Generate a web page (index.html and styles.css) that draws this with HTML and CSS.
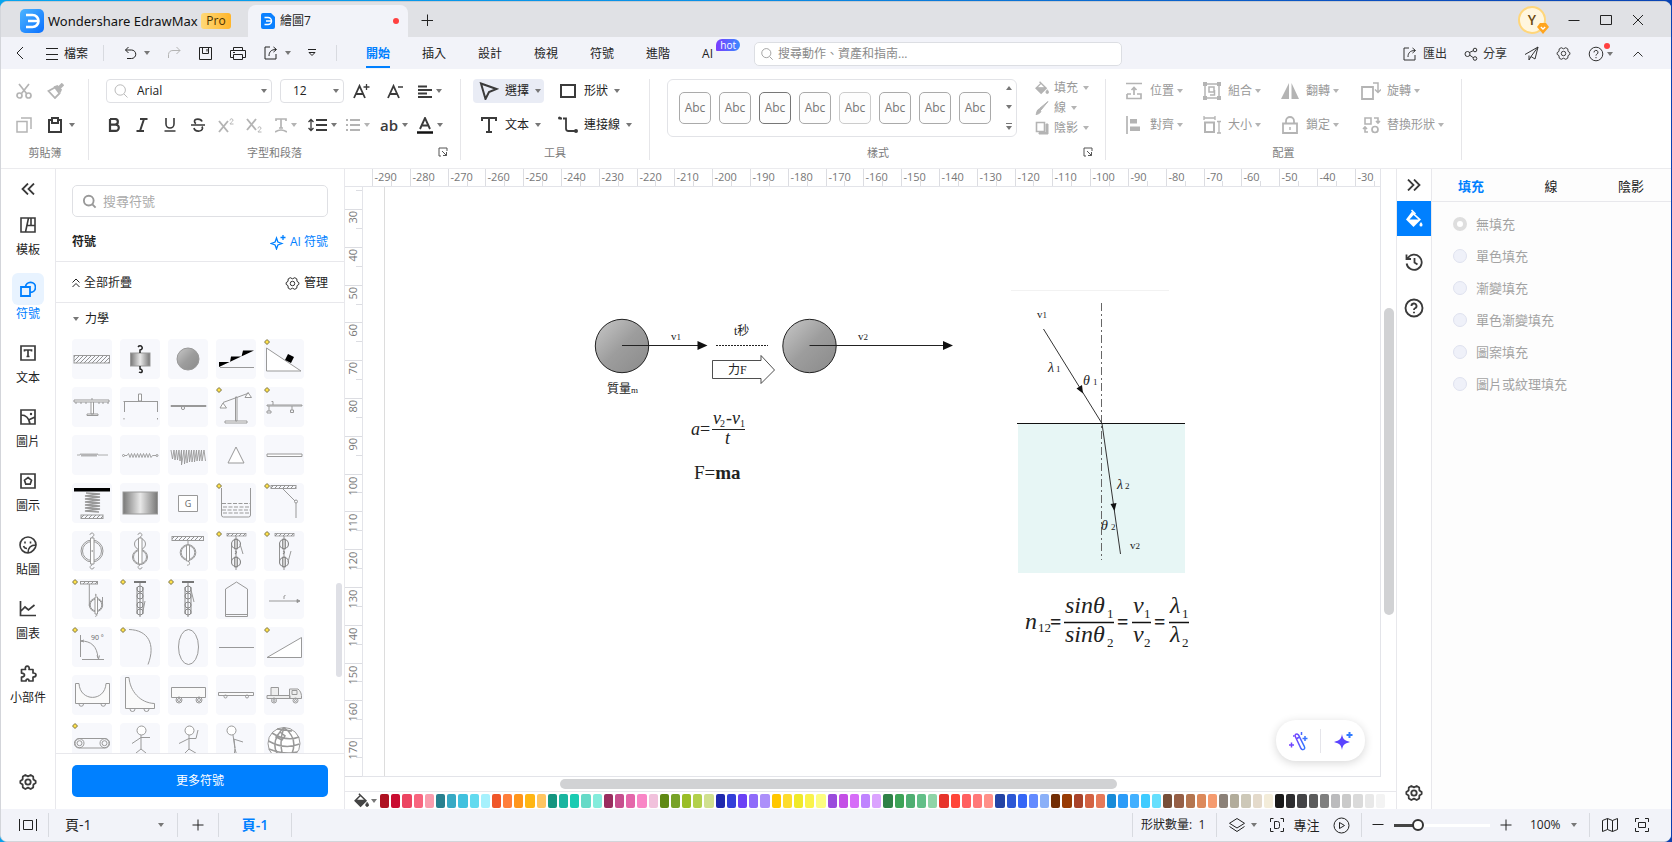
FILE: index.html
```html
<!DOCTYPE html>
<html lang="zh-Hant">
<head>
<meta charset="utf-8">
<title>Wondershare EdrawMax</title>
<meta name="viewport" content="width=device-width, initial-scale=1">
<link rel="stylesheet" href="styles.css">
</head>
<body>
<svg class="defs" width="0" height="0" aria-hidden="true">
  <defs>
    <linearGradient id="g-logo" x1="0" y1="0" x2="1" y2="1"><stop offset="0" stop-color="#4db5ff"/><stop offset="1" stop-color="#0a70ff"/></linearGradient>
    <linearGradient id="g-ball" x1="0" y1="0" x2="1" y2="1"><stop offset="0" stop-color="#c9c9c9"/><stop offset=".5" stop-color="#9d9d9d"/><stop offset="1" stop-color="#8a8a8a"/></linearGradient>
    <linearGradient id="g-metal"><stop offset="0" stop-color="#777"/><stop offset=".5" stop-color="#e8e8e8"/><stop offset="1" stop-color="#777"/></linearGradient>
    <linearGradient id="g-ai" x1="0" y1="0" x2="1" y2="0"><stop offset="0" stop-color="#7a3cff"/><stop offset="1" stop-color="#2f7bff"/></linearGradient>
    <pattern id="hatch" width="4" height="4" patternUnits="userSpaceOnUse"><path d="M-1 5 5-1M-1 1 1-1M3 5 5 3" stroke="#777" stroke-width=".8"/></pattern>
    <symbol id="mark" viewBox="0 0 6 6"><path d="M3 .5 5.500 3 3 5.500.5 3z" fill="#ffe14a" stroke="#6b6436" stroke-width=".9"/></symbol>
    <symbol id="gear" viewBox="0 0 16 16"><path d="M5.600 1.800 8 3l2.400-1.200 2.200 1.300.2 2.600 2 1.400v1.800l-2 1.400-.2 2.600-2.200 1.300L8 13l-2.400 1.200-2.200-1.300-.2-2.600-2-1.400V7.100l2-1.400.2-2.600z" fill="none" stroke="currentColor" stroke-linejoin="round"/><circle cx="8" cy="8" r="2.400" fill="none" stroke="currentColor"/></symbol>
    <symbol id="lens" viewBox="0 0 16 16"><circle cx="7.200" cy="7" r="5.200" fill="none" stroke="currentColor"/><path d="m11 11 3.500 3.500" fill="none" stroke="currentColor"/></symbol>
    <symbol id="help" viewBox="0 0 16 16"><circle cx="8" cy="8" r="6.800" fill="none" stroke="currentColor"/><path d="M6 6.400a2 2 0 1 1 2.800 1.800c-.6.3-.8.6-.8 1.400M8 11v1.200" fill="none" stroke="currentColor"/></symbol>
    <symbol id="export" viewBox="0 0 16 16"><path d="M7 2H2v12h11v-5M6 11c0-4 2-6.500 7-6.500M10.500 2l3 2.500-3 2.500" fill="none" stroke="currentColor"/></symbol>
    <symbol id="bucket" viewBox="0 0 16 16"><path d="M5.200.8 12.800 8.200 7 14 1.200 8.200 6.500 3M2.500 8h9L7 13.500z" fill="none" stroke="currentColor" stroke-width="1.600"/><path d="M2 8.200h10L7 13.400z" fill="currentColor"/><path d="M14 10c1.300 1.700 1.500 2.200 1.500 2.800a1.500 1.500 0 0 1-3 0c0-.6.300-1.200 1.500-2.800" fill="currentColor"/></symbol>
    <symbol id="launch" viewBox="0 0 10 10"><path d="M3 9H1V1h8v3M4 4l4.500 4.500M8.500 5v3.500H5" fill="none" stroke="currentColor"/></symbol>
    <symbol id="hooks" viewBox="0 0 40 40"><path d="M20 7V6c3-1 2-4 0-4s-2 2-2 2M20 33v1c-3 1-2 4 0 4s2-2 2-2" fill="none" stroke="#999"/></symbol>
    <symbol id="pulleys" viewBox="0 0 40 40"><rect x="11" y="2.500" width="19" height="2.500" fill="url(#hatch)" stroke="#888" stroke-width=".7"/><path d="M20 5v34M15.500 13v18M18.500 8v10h3V8zM18.500 26v10h3V26z" fill="#fff" stroke="#888" stroke-width=".9"/><g fill="none" stroke="#888" stroke-width="1.200"><circle cx="20" cy="13" r="4.500"/><circle cx="20" cy="31" r="4.500"/><path d="M19 20q3 1 0 3"/></g></symbol>
    <symbol id="chain" viewBox="0 0 40 40"><rect x="14" y="2" width="12" height="2" fill="#777" stroke="none"/><path d="M20 4v34M17 8v27M23 8v27" stroke="#888" fill="none"/><g fill="none" stroke="#888"><circle cx="20" cy="10" r="3"/><circle cx="20" cy="17" r="3"/><circle cx="20" cy="26" r="3"/><circle cx="20" cy="33" r="3"/></g></symbol>
  </defs>
</svg>

<div class="window">
  <header class="titlebar">
    <div class="brand">
      <svg width="24" height="24" viewBox="0 0 24 24"><rect width="24" height="24" rx="5" fill="url(#g-logo)"/><path d="M6 6h6.500a6 6 0 0 1 0 12H6M8 12h10" fill="none" stroke="#fff" stroke-width="2.600"/></svg>
      <span class="brand-name">Wondershare EdrawMax</span>
      <span class="pro">Pro</span>
    </div>
    <div class="doc-tab">
      <svg width="14" height="16" viewBox="0 0 14 16"><path d="M2 0h8l4 4v10a2 2 0 0 1-2 2H2a2 2 0 0 1-2-2V2a2 2 0 0 1 2-2" fill="#0a80ff"/><path d="M3.500 4.500h3.500a3.500 3.500 0 0 1 0 7H3.500M5 8h5" fill="none" stroke="#fff" stroke-width="1.500"/></svg>
      <span>繪圖7</span><i class="dot"></i>
    </div>
    <button class="add-doc" aria-label="新增文件"><svg width="12" height="12" viewBox="0 0 12 12"><path d="M6.500 .5v12M.5 6.500h12"/></svg></button>
    <div class="win-tools">
      <button class="avatar" aria-label="帳戶">Y<svg class="gem" width="12" height="11" viewBox="0 0 12 11"><path d="M3 0h6l3 4-6 7-6-7z" fill="#ffa51f"/><path d="m3.800 4 2.200 2 2.200-2" fill="none" stroke="#fff" stroke-width="1.300"/></svg></button>
      <button aria-label="最小化"><svg width="12" height="12" viewBox="0 0 12 12"><path d="M.5 6.500h11"/></svg></button>
      <button aria-label="最大化"><svg width="12" height="12" viewBox="0 0 12 12"><path d="M.5 1.500h11v9H.5z"/></svg></button>
      <button aria-label="關閉"><svg width="12" height="12" viewBox="0 0 12 12"><path d="m1 1 10 10M11 1 1 11"/></svg></button>
    </div>
  </header>

  <nav class="menubar">
    <button class="back" aria-label="返回"><svg width="8" height="14" viewBox="0 0 8 14"><path d="M7 1 1 7l6 6"/></svg></button>
    <button class="file"><svg width="12" height="12" viewBox="0 0 12 12"><path d="M0 .5h12M0 6.500h12M0 11.500h12"/></svg>檔案</button>
    <i class="vbar"></i>
    <div class="quick">
      <button aria-label="復原"><svg width="14" height="14" viewBox="0 0 14 14"><path d="M4.500 1 1.500 4l3 3M1.500 4h6a4 4 0 0 1 0 8.500H3"/></svg><i class="caret"></i></button>
      <button class="off" aria-label="重做"><svg width="14" height="14" viewBox="0 0 14 14"><path d="m9.500 1 3.500 3.500L9.500 8M13 4.500H6a4.500 4.500 0 0 0-4.500 4V12"/></svg></button>
      <button aria-label="儲存"><svg width="15" height="15" viewBox="0 0 15 15"><path d="M1.500 1.500h12v12h-12zM4.500 1.500v6h6v-6M9 3v2.500"/></svg></button>
      <button aria-label="列印"><svg width="16" height="15" viewBox="0 0 16 15"><path d="M3.500 4.500v-3h9v3M3.500 11.500h-3v-7h15v7h-3M3.500 8.500h9v5h-9zM3 6.500h2"/></svg></button>
      <button aria-label="匯出"><svg width="16" height="16"><use href="#export"/></svg><i class="caret"></i></button>
      <button aria-label="自訂工具列"><svg width="8" height="8" viewBox="0 0 8 8"><path d="M0 .5h8M1 3.500l3 3 3-3z"/></svg></button>
    </div>
    <i class="vbar"></i>
    <div class="tabs">
      <a class="on" href="#home">開始</a><a href="#insert">插入</a><a href="#design">設計</a><a href="#view">檢視</a><a href="#symbols">符號</a><a href="#advanced">進階</a><a class="ai" href="#ai">AI<b class="hot">hot</b></a>
    </div>
    <label class="find"><svg width="14" height="14"><use href="#lens" width="14" height="14"/></svg><input type="text" aria-label="搜尋" placeholder="搜尋動作、資產和指南..."></label>
    <div class="menu-right">
      <button><svg width="16" height="16"><use href="#export"/></svg>匯出</button>
      <button><svg width="14" height="14" viewBox="0 0 14 14"><circle cx="3.500" cy="7" r="2.500"/><circle cx="11" cy="3" r="1.800"/><circle cx="11" cy="11.500" r="1.800"/><path d="M5.500 5.500 9.300 3.700M5.800 8.200l3.500 2.500"/></svg>分享</button>
      <button aria-label="傳送"><svg width="15" height="15" viewBox="0 0 15 15"><path d="M1 8.500 14 1l-3 12-4-2.500L14 1M5 9.500V14l2-3.500"/></svg></button>
      <button aria-label="設定"><svg width="15" height="15"><use href="#gear" width="15" height="15"/></svg></button>
      <button class="help" aria-label="說明"><svg width="16" height="16"><use href="#help" width="16" height="16"/></svg><i class="dot"></i><i class="caret"></i></button>
      <button aria-label="收合功能區"><svg width="10" height="6" viewBox="0 0 10 6"><path d="m.5 5.500 4.500-4.500 4.500 4.500"/></svg></button>
    </div>
  </nav>

  <section class="ribbon">
    <div class="group clip">
      <div class="row"><button class="off" aria-label="剪下"><svg width="16" height="16" viewBox="0 0 16 16"><g stroke-width="1.700"><path d="M3 1l7.500 9.500M13 1 5.500 10.500"/><circle cx="3.500" cy="12.500" r="2.500"/><circle cx="12.500" cy="12.500" r="2.500"/></g></svg></button><button class="off" aria-label="複製格式"><svg width="17" height="16" viewBox="0 0 17 16"><path d="M1.500 8 8 4.500l4.500 6L8 15z" stroke-width="1.800"/><path d="M6.500 3.500 13.500 10 15 6.500 10.500 2z" fill="currentColor" stroke="none"/><path d="m12 5 4-4" stroke-width="3.500"/></svg></button></div>
      <div class="row"><button class="off" aria-label="複製"><svg width="16" height="16" viewBox="0 0 16 16"><path d="M1 4.500h10V15H1zM5 1h10v11" stroke-width="1.500"/></svg></button><button aria-label="貼上"><svg width="16" height="16" viewBox="0 0 16 16"><path d="M5 3H2v12h12V3h-3M5 1h6v5H5z" stroke-width="2"/></svg><i class="caret"></i></button></div>
      <h2>剪貼簿</h2>
    </div>
    <div class="group font">
      <div class="row first">
        <label class="combo family"><svg width="16" height="16"><use href="#lens"/></svg><select aria-label="字型"><option>Arial</option></select><i class="caret"></i></label>
        <label class="combo size"><select aria-label="字型大小"><option>12</option></select><i class="caret"></i></label>
        <button class="w34" aria-label="放大字型"><svg width="17" height="16" viewBox="0 0 17 16"><path d="m1 15 5.500-12L12 15M3 11h7" stroke-width="1.800"/><path d="M10.500 4h6M13.500 1v6" stroke-width="1.300"/></svg></button>
        <button class="w34" aria-label="縮小字型"><svg width="17" height="16" viewBox="0 0 17 16"><path d="m1 15 5.500-12L12 15M3 11h7" stroke-width="1.800"/><path d="M11 4h5" stroke-width="1.300"/></svg></button>
        <button class="w36" aria-label="對齊"><svg width="14" height="13" viewBox="0 0 14 13"><path d="M0 1.500h9M0 5h14M0 8.500h9M0 12h14" stroke-width="1.800"/></svg><i class="caret"></i></button>
      </div>
      <div class="row">
        <button class="w28" aria-label="粗體"><svg width="12" height="14" viewBox="0 0 12 14"><path d="M2 1h5a2.800 2.800 0 0 1 0 5.700H2V1M2 6.700h5.700a3 3 0 0 1 0 6.200H2V6" stroke-width="2.200"/></svg></button>
        <button class="w28" aria-label="斜體"><svg width="12" height="14" viewBox="0 0 12 14"><path d="M4 1h7.500M.5 13H8M8 1 4 13" stroke-width="2"/></svg></button>
        <button class="w28" aria-label="底線"><svg width="12" height="14" viewBox="0 0 12 14"><path d="M2 0v6a4 4 0 0 0 8 0V0M.5 13h11" stroke-width="1.600"/></svg></button>
        <button class="w28" aria-label="刪除線"><svg width="14" height="14" viewBox="0 0 14 14"><path d="M11 3.500C10 .2 3.500.2 3.500 3.500c0 1 .6 1.600 1.500 2M0 7h14M3 10c.6 4 8.500 4 8.500.3 0-.7-.3-1.200-.7-1.600" stroke-width="1.700"/></svg></button>
        <button class="w28 off" aria-label="上標"><svg width="16" height="15" viewBox="0 0 16 15"><path d="m1 3 9 11M10 3 1 14" stroke-width="1.900"/><path d="M12 2.500c0-2.500 3-2 3-.3C15 3.500 12 5 12 6h3.500"/></svg></button>
        <button class="w28 off" aria-label="下標"><svg width="16" height="15" viewBox="0 0 16 15"><path d="m1 1 9 11M10 1 1 12" stroke-width="1.900"/><path d="M12 10.500c0-2.500 3-2 3-.3 0 1.300-3 2.800-3 3.800h3.500"/></svg></button>
        <button class="w36 off" aria-label="文字效果"><svg width="12" height="15" viewBox="0 0 12 15"><path d="M1 3V1h10v2M6 1v9M4 10h4M0 14q6-4 12 0" stroke-width="1.700"/></svg><i class="caret"></i></button>
        <button class="w36" aria-label="行距"><svg width="19" height="14" viewBox="0 0 19 14"><path d="M8 2h11M8 7h11M8 12h11" stroke-width="2"/><path d="M3 1v12M.5 4 3 1.500 5.500 4M.5 10 3 12.500 5.500 10" stroke-width="1.300"/></svg><i class="caret"></i></button>
        <button class="w36 off" aria-label="項目符號"><svg width="14" height="12" viewBox="0 0 14 12"><path d="M4 1h10M4 6h10M4 11h10M0 1h2M0 6h2M0 11h2" stroke-width="2"/></svg><i class="caret"></i></button>
        <button class="w36 ab" aria-label="大小寫">ab<i class="caret"></i></button>
        <button class="w36" aria-label="字型色彩"><svg width="16" height="17" viewBox="0 0 16 17"><path d="m3 12 5-11 5 11M5 8.500h6" stroke-width="1.900"/><path d="M0 15.500h16" stroke="#111" stroke-width="2.500"/></svg><i class="caret"></i></button>
      </div>
      <h2>字型和段落</h2><button class="launch" aria-label="字型設定"><svg width="10" height="10"><use href="#launch"/></svg></button>
    </div>
    <div class="group tools">
      <div class="row"><button class="tool sel"><svg width="20" height="18" viewBox="0 0 20 18"><path d="M2 1.500 17.500 7 10 10l-3.500 7z" stroke-width="2"/></svg>選擇<i class="caret"></i></button><button class="tool"><svg width="20" height="18" viewBox="0 0 20 18"><path d="M3 3h14v12H3z" stroke-width="2"/></svg>形狀<i class="caret"></i></button></div>
      <div class="row"><button class="tool"><svg width="20" height="18" viewBox="0 0 20 18"><path d="M3 5V2h14v3M10 2v14M7 16h6" stroke-width="2"/></svg>文本<i class="caret"></i></button><button class="tool"><svg width="20" height="18" viewBox="0 0 20 18"><path d="M2 2.500h6v10q0 2.500 2.500 2.500H18" stroke-width="1.800" stroke-dasharray="2 1 30"/><circle cx="1.500" cy="2" r="1.500" fill="currentColor" stroke="none"/><circle cx="18" cy="15" r="2" fill="currentColor" stroke="none"/></svg>連接線<i class="caret"></i></button></div>
      <h2>工具</h2>
    </div>
    <div class="group styles">
      <div class="style-row">
        <div class="gallery">
          <button>Abc</button><button>Abc</button><button class="dk">Abc</button><button>Abc</button><button class="lt">Abc</button><button>Abc</button><button>Abc</button><button>Abc</button>
          <div class="scroller"><i class="caret up"></i><i class="caret"></i><i class="more"><i class="caret"></i></i></div>
        </div>
        <div class="paint off">
          <button><svg width="14" height="14"><use href="#bucket" width="14" height="14"/></svg>填充<i class="caret"></i></button>
          <button><svg width="14" height="14" viewBox="0 0 14 14"><path d="M13 .5 6 9 4.500 7.500zM4 8l2 2c-.5 2-2 3-5 3.500C2 12 1.500 9 4 8" fill="currentColor"/></svg>線<i class="caret"></i></button>
          <button><svg width="14" height="14" viewBox="0 0 14 14"><path d="M1.500 1.500h8v9h-8z" stroke-width="1.600"/><path d="M11 3h2v10H4v-1.500h7z" fill="currentColor"/></svg>陰影<i class="caret"></i></button>
        </div>
      </div>
      <h2>樣式</h2><button class="launch" aria-label="樣式設定"><svg width="10" height="10"><use href="#launch"/></svg></button>
    </div>
    <div class="group arrange">
      <div class="matrix off">
        <button><svg width="20" height="18" viewBox="0 0 20 18"><path d="M2 1.500h16M3 12v4.500h14V12h-4M3 12h4M10 13V6M7.500 8 10 5.500 12.500 8" stroke-width="1.700"/></svg>位置<i class="caret"></i></button>
        <button><svg width="20" height="18" viewBox="0 0 20 18"><path d="M3 2h14v14H3z" stroke-width="1.500"/><path d="M1 0h4v4H1zM15 0h4v4h-4zM1 14h4v4H1zM15 14h4v4h-4z" fill="currentColor" stroke="none"/><path d="M7 5h5v5H7zM12.500 8v5H8" stroke-width="1.500"/></svg>組合<i class="caret"></i></button>
        <button><svg width="20" height="18" viewBox="0 0 20 18"><path d="M9 1v16H1zM11.500 1v16H19z" fill="currentColor" stroke="none"/></svg>翻轉<i class="caret"></i></button>
        <button><svg width="20" height="18" viewBox="0 0 20 18"><path d="M1 5h11v12H1z" stroke-width="1.800"/><path d="M12 1h5v9M14 7.500l3 3 3-3" stroke-width="1.500"/></svg>旋轉<i class="caret"></i></button>
        <button><svg width="20" height="18" viewBox="0 0 20 18"><path d="M3 0v18" stroke-width="1.700"/><path d="M6 3h7v4.500H6zM6 10.500h10V15H6z" fill="currentColor" stroke="none"/></svg>對齊<i class="caret"></i></button>
        <button><svg width="20" height="18" viewBox="0 0 20 18"><path d="M3 6.500h9V16H3z" stroke-width="2"/><path d="M2 2h11M2 0v4M13 0v4M17 5.500V17M15 5.500h4M15 17h4" stroke-width="1.300"/></svg>大小<i class="caret"></i></button>
        <button><svg width="20" height="18" viewBox="0 0 20 18"><path d="M3 7.500h14V17H3zM6 7V5a4 4 0 0 1 8 0v2" stroke-width="1.800"/><path d="M10 11v3" stroke-width="1.500"/></svg>鎖定<i class="caret"></i></button>
        <button><svg width="20" height="18" viewBox="0 0 20 18"><path d="M4 2h6v6H4zM13 2h4v4M15 5l2 2 2-2M7 16H4v-4M2 13l2-2 2 2" stroke-width="1.600"/><circle cx="14" cy="13.500" r="3" stroke-width="1.700"/></svg>替換形狀<i class="caret"></i></button>
      </div>
      <h2>配置</h2>
    </div>
  </section>

  <main class="work">
    <aside class="rail">
      <button class="fold" aria-label="收合"><svg width="14" height="12" viewBox="0 0 14 12"><path d="M7 .5 1.500 6 7 11.500M13 .5 7.500 6l5.500 5.500" stroke-width="1.800"/></svg></button>
      <a href="#tpl"><span><svg width="16" height="16" viewBox="0 0 16 16"><path d="M1 1h14v14H1zM5.500 15 8.500 1M7.500 8.500H15M11 1v7" stroke-width="1.600"/></svg></span>模板</a>
      <a class="on" href="#sym"><span><svg width="16" height="16" viewBox="0 0 16 16"><path d="M1 6h9v9H1zM5.500 6a5 5 0 1 1 5 5.300" stroke-width="1.800"/></svg></span>符號</a>
      <a href="#text"><span><svg width="16" height="16" viewBox="0 0 16 16"><path d="M1 1h14v14H1z" stroke-width="1.700"/><path d="M4.500 6.500V5h7v1.500M8 5v6.500M6.500 11.500h3" stroke-width="1.700"/></svg></span>文本</a>
      <a href="#pic"><span><svg width="16" height="16" viewBox="0 0 16 16"><path d="M1 1h14v14H1zM1 6c5 0 8 3 9 9M8.500 11 15 8" stroke-width="1.700"/><circle cx="11" cy="5" r="1.200" fill="currentColor" stroke="none"/></svg></span>圖片</a>
      <a href="#icon"><span><svg width="16" height="16" viewBox="0 0 16 16"><path d="M1 1h14v14H1zM8 4.500l3.500 2.700-1.300 4H5.800l-1.300-4z" stroke-width="1.700"/></svg></span>圖示</a>
      <a href="#sticker"><span><svg width="18" height="18" viewBox="0 0 18 18"><path d="M17 9a8 8 0 1 0-8 8c0-5 3-8 8-8 0 3-4 8-8 8M4.500 10c.6 1.700 2 2.500 3.500 2.500" stroke-width="1.600"/><path d="M6 5.500v2M11.500 5.500v2" stroke-width="1.600"/></svg></span>貼圖</a>
      <a href="#chart"><span><svg width="18" height="16" viewBox="0 0 18 16"><path d="M1.500 0v14.500H17M2 10l4-4 3.500 3L15.500 4" stroke-width="1.700"/></svg></span>圖表</a>
      <a href="#widget"><span><svg width="18" height="17" viewBox="0 0 18 17"><path d="M2.500 4.500h4c-1.500-4.500 5-4.500 3.500 0h4V8c4 0 4 4 0 4v4h-4c0-2.500-3-2.500-3 0h-4.500v-4c4-.3 4-4 0-3.800z" stroke-width="1.700" stroke-linejoin="round"/></svg></span>小部件</a>
      <button class="pref" aria-label="設定"><svg width="18" height="18"><use href="#gear" width="18" height="18" stroke-width="1.600"/></svg></button>
    </aside>

    <section class="panel">
      <label class="sym-find"><svg width="15" height="15"><use href="#lens" width="15" height="15" stroke-width="2"/></svg><input type="text" aria-label="搜尋符號" placeholder="搜尋符號"></label>
      <div class="panel-head"><h1>符號</h1><a href="#ai-symbol"><svg width="16" height="15" viewBox="0 0 16 15"><path d="m6.500 3 1.400 4 4 1.500-4 1.500-1.400 4-1.400-4-4-1.500 4-1.500zM13 0v5M10.500 2.500h5" stroke-width="1.300"/></svg>AI 符號</a></div>
      <div class="panel-bar"><button><svg width="8" height="10" viewBox="0 0 8 10"><path d="M.5 4.500 4 1l3.500 3.500M.5 9 4 5.500 7.500 9"/></svg>全部折疊</button><button><svg width="15" height="15"><use href="#gear" width="15" height="15"/></svg>管理</button></div>
      <div class="library">
        <button class="cat"><i class="caret"></i>力學</button>
        <div class="symbols">
          <svg viewBox="0 0 40 40"><rect x="2" y="16.500" width="35.500" height="7.500" fill="url(#hatch)"/></svg>
          <svg viewBox="0 0 40 40"><rect x="10.500" y="14" width="19.500" height="13" fill="url(#g-metal)"/><path d="M20 14v-3c4-1 2-5-1-4l-1 1M20 27v3c4 1 2 5-1 3" stroke="#222" stroke-width="1.500"/></svg>
          <svg viewBox="0 0 40 40"><circle cx="20" cy="20" r="11" fill="url(#g-ball)"/></svg>
          <svg viewBox="0 0 40 40"><path d="M3 28V23h11l1-5.500h10.500L27 11.500h11z" fill="#000" stroke="none"/><path d="M4 28.500h34"/></svg>
          <svg viewBox="0 0 40 40"><path d="M2.500 9v23H37z" fill="#fff"/><path d="m24 15 6 3-3 6-6-3z" fill="#000" stroke="none"/><use href="#mark" width="6" height="6"/></svg>
          <svg viewBox="0 0 40 40"><path d="M2 13h35v2H2zM4 15v2M9 15v2M14 15v2M27 15v2M31 15v2M36 15v2M19 15v12h2.500V15M20 11v2M15 27h11v1.500H15z" fill="#fff"/></svg>
          <svg viewBox="0 0 40 40"><path d="M3.500 14.500H38M18.500 7h3v7h-3zM4.500 15v10M37.500 15v10M4 31v1.500M37.500 31v1.500" fill="#fff"/></svg>
          <svg viewBox="0 0 40 40"><path d="M3 18.500h35v1H3z"/><circle cx="15" cy="21" r="1.600"/></svg>
          <svg viewBox="0 0 40 40"><path d="M19.500 10h1.500v24h-1.500zM9 34h22v2H9zM7 15.500 33 6M7 16l-3 5h6.500zM32 5.500l-3 5h6.500z" fill="#fff"/><use href="#mark" width="6" height="6"/></svg>
          <svg viewBox="0 0 40 40"><path d="M3 18h35v1H3zM7.500 14.500h1.500V18M5 19v5H3v2h4v-2H5M28 19v4h-1.500v2.500h3V23H28"/><use href="#mark" width="6" height="6"/></svg>
          <svg viewBox="0 0 40 40"><path d="M5 20h3l1-1.500 1 3 1-3 1 3 1-3 1 3 1-3 1 3 1-3 1 3 1-3 1 3 1-3 1 3 1-3 1 3 1-3 1 1.500H36" stroke-width=".8"/></svg>
          <svg viewBox="0 0 40 40"><circle cx="3.500" cy="20.500" r="1"/><circle cx="37" cy="20.500" r="1"/><path d="M4.500 20.500H7l1.500-2 1.500 4 1.500-4 1.500 4 1.500-4 1.500 4 1.500-4 1.500 4 1.500-4 1.500 4 1.500-4 1.500 4 1.500-4 1.500 4 1.500-4 1.500 4 1.500-2H36" stroke-width=".9"/></svg>
          <svg viewBox="0 0 40 40"><path d="M3 15 4.500 24 6 15 7 25 8.500 15 9.500 25 11 15 12 26 13.500 15V30L16 15 16.500 29 18.500 15 19 28 21 15 21.500 27 23.500 15 24 27 26 15 26.500 27 28.500 15 29 26 31 15 31.500 26 33.500 15 34 26 36 15 37.500 26" stroke-width=".9"/></svg>
          <svg viewBox="0 0 40 40"><path d="M20 12 12 28h16z" fill="#fff"/></svg>
          <svg viewBox="0 0 40 40"><path d="M3 19h35v2.500H3z" fill="#fff"/></svg>
          <svg viewBox="0 0 40 40"><path d="M2 5h36v3.500H2z" fill="#000" stroke="none"/><path d="m14 10 14 1-15 2 15 1-15 2 15 1-15 2 15 1-15 2 15 1-15 2 15 1-15 2 14 1" stroke-width="1.600"/><rect x="9" y="32" width="22" height="3.500" fill="url(#hatch)"/></svg>
          <svg viewBox="0 0 40 40"><rect x="3" y="9" width="34.500" height="22" fill="url(#g-metal)"/></svg>
          <svg viewBox="0 0 40 40"><path d="M10.500 12.500h19v16h-19z" fill="#fff"/><text class="g" x="20" y="24">G</text></svg>
          <svg viewBox="0 0 40 40"><path d="M5.500 5v27q0 2 2 2h25q2 0 2-2V5"/><path d="M6 20.500h28M7 24h26M6 27h28M7 30h26" stroke-dasharray="4 1.500"/><use href="#mark" width="6" height="6"/></svg>
          <svg viewBox="0 0 40 40"><rect x="7" y="2.500" width="25" height="3" fill="url(#hatch)"/><path d="m19 6 12 12M32 20v15"/><circle cx="32" cy="18.500" r="1.500"/><use href="#mark" width="6" height="6"/></svg>
          <svg viewBox="0 0 40 40"><circle cx="20" cy="20" r="11"/><circle cx="20" cy="20" r="9.500"/><path d="M18.500 7h3.500v26h-3.500z" fill="#fff"/><use href="#hooks"/><circle cx="20.200" cy="20" r=".5"/></svg>
          <svg viewBox="0 0 40 40"><circle cx="20" cy="13" r="5.500"/><circle cx="20" cy="26" r="7.500"/><circle cx="20" cy="26" r="6.500"/><path d="M18.500 7h3.500v26h-3.500z" fill="#fff"/><use href="#hooks"/></svg>
          <svg viewBox="0 0 40 40"><rect x="4" y="5.500" width="31.500" height="4" fill="url(#hatch)"/><circle cx="20" cy="21.500" r="7.800"/><circle cx="20" cy="21.500" r="6.800"/><path d="M20 9.500v5M18.500 14h3v16h-3zM20 30c3 2 1 5-1 4" fill="#fff"/></svg>
          <svg viewBox="0 0 40 40"><use href="#pulleys"/><path d="m24 13 3 10"/><use href="#mark" width="6" height="6"/></svg>
          <svg viewBox="0 0 40 40"><use href="#pulleys"/><path d="m24 31 3-11"/><use href="#mark" width="6" height="6"/></svg>
          <svg viewBox="0 0 40 40"><rect x="8.500" y="2.500" width="17" height="2.500" fill="url(#hatch)"/><circle cx="24" cy="26" r="6.700"/><circle cx="24" cy="26" r="5.800"/><path d="M17.300 5v22M30.500 25v-7M23 18h2.500v17H23zM23 17q3-1 0-2M24 35c2 1 0 3-1 2" fill="#fff"/><use href="#mark" width="6" height="6"/></svg>
          <svg viewBox="0 0 40 40"><use href="#chain"/><path d="m23 32 2-10"/><use href="#mark" width="6" height="6"/></svg>
          <svg viewBox="0 0 40 40"><use href="#chain"/><path d="m23 11 3 12"/><use href="#mark" width="6" height="6"/></svg>
          <svg viewBox="0 0 40 40"><path d="m20.500 3 11 7v27.500h-22V10zM9.500 35.500h22"/></svg>
          <svg viewBox="0 0 40 40"><path d="M5 22h29M20 20v-3l1.500-.5"/><path d="m33 20.500 3 1.500-3 1.500z" fill="#888"/></svg>
          <svg viewBox="0 0 40 40"><path d="M8.500 8v22M9 14c10 0 16 5 17 17M10 32.500h22M25 28.500l1.500 3.500 1-3.500M12 13l-3 1 3 1"/><text class="deg" x="19" y="13">90 °</text><use href="#mark" width="6" height="6"/></svg>
          <svg viewBox="0 0 40 40"><path d="M9 2.500C28 3 36 17 28 37.500"/><use href="#mark" width="6" height="6"/></svg>
          <svg viewBox="0 0 40 40"><ellipse cx="20.500" cy="20" rx="10" ry="17.500"/></svg>
          <svg viewBox="0 0 40 40"><path d="M3 20.500h35"/></svg>
          <svg viewBox="0 0 40 40"><path d="M3 30.500h34.500v-20z" fill="#fff"/><use href="#mark" width="6" height="6"/></svg>
          <svg viewBox="0 0 40 40"><path d="M3.500 8.500H7C8 27 33 27 34 8.500h3.500v20h-34z" fill="#fafafa"/><path d="M7 29a2 2 0 0 0 4.500 0M29 29a2 2 0 0 0 4.500 0"/></svg>
          <svg viewBox="0 0 40 40"><path d="M5.500 2.500H9C10 16 20 28 34.500 28.500v5h-29z" fill="#fafafa"/><path d="M10 34a2.500 2.500 0 1 0 5 0M24 34a2.500 2.500 0 1 0 5 0"/></svg>
          <svg viewBox="0 0 40 40"><path d="M3.500 12.500h34v10h-34z" fill="#fafafa"/><circle cx="11" cy="25" r="3"/><circle cx="31" cy="25" r="3"/><circle cx="11" cy="25" r="1.500"/><circle cx="31" cy="25" r="1.500"/></svg>
          <svg viewBox="0 0 40 40"><path d="M2.500 17.500h35v3h-35z" fill="#fafafa"/><circle cx="9.500" cy="21.500" r="1.500"/><circle cx="31" cy="21.500" r="1.500"/></svg>
          <svg viewBox="0 0 40 40"><path d="M3 20.500h23v3H3zM7 12.500h7.500v8H7zM25.500 23.500V14H34q4 3 3.500 9.500zM28 15.500h5v4h-5z" fill="#eee"/><circle cx="10" cy="25.500" r="2.500"/><circle cx="31.500" cy="25.500" r="2.500"/><circle cx="10" cy="25.500" r="1"/><circle cx="31.500" cy="25.500" r="1"/></svg>
          <svg viewBox="0 0 40 40"><rect x="2.500" y="15.500" width="35" height="9.500" rx="4.500"/><circle cx="7.500" cy="20.200" r="4.500"/><circle cx="32.500" cy="20.200" r="4.500"/><circle cx="7.500" cy="20.200" r="2.500"/><circle cx="32.500" cy="20.200" r="2.500"/><use href="#mark" width="6" height="6"/></svg>
          <svg viewBox="0 0 40 40"><circle cx="21.500" cy="7.500" r="4.500" fill="#fff"/><path d="M21 12v14M12 20.500 21 14.500h9M21 26l-5 4v10M21 26l5 4v10"/></svg>
          <svg viewBox="0 0 40 40"><circle cx="21.500" cy="7.500" r="4.500" fill="#fff"/><path d="M21 12v14M11 20.500 21 15.500h7L30 7M21 26l-5 5v9M21 26l10 6v8"/></svg>
          <svg viewBox="0 0 40 40"><circle cx="15.500" cy="7.500" r="4.500" fill="#fff"/><path d="M17 12l2 14M17.500 16l9.500 3M18 16l1 9M19 26l-2 14M19 26l4 14"/></svg>
          <svg viewBox="0 0 40 40"><circle cx="20" cy="20.500" r="16" fill="#fff"/><path d="M20 4.500q-16 15-4 31M20 4.500q16 12 6 30M8 10q14 9 27 4M4.500 18q16 9 31 3M5 26q15 6 28 3M20 4.500q-6 15 0 32M13 6l15 2M12 14l4-5 5 4-3 4z" stroke-width="1.500"/></svg>
        </div>
      </div>
      <i class="thumb"></i>
      <div class="panel-foot"><button>更多符號</button></div>
    </section>

    <section class="stage">
      <div class="ruler-h" id="ruler-h"></div>
      <div class="ruler-v" id="ruler-v"></div>
      <div class="canvas">
        <svg class="drawing" width="1017" height="590" viewBox="363 187 1017 590">
          <path d="M384.500 187v590" stroke="#ddd"/>
          <g stroke="#222" fill="none">
            <circle cx="622" cy="346" r="26.700" fill="url(#g-ball)"/><circle cx="809.500" cy="346" r="26.700" fill="url(#g-ball)"/>
            <path d="M622 345.500h76M809.500 345.500H944"/><path d="M716 345.500h52" stroke-dasharray="2 1"/>
            <path d="M712.500 360.500H761v-5l13.500 14.500L761 383.500v-5h-48.500z" fill="#fff" stroke-width=".8"/>
            <path d="M1011 290.500h158" stroke="#f2f2f2"/>
          </g>
          <path d="m697.500 341 10 4.500-10 4.500zM943 341l10 4.500-10 4.500z" fill="#111"/>
          <g class="label"><text x="671" y="340">v<tspan class="s">1</tspan></text><text x="858" y="340">v<tspan class="s">2</tspan></text><text class="m" x="734" y="335">t秒</text><text class="m" x="728" y="374">力F</text><text class="m" x="607" y="393">質量<tspan class="s">m</tspan></text></g>
          <g class="math mid"><text x="691" y="435">a</text><text class="r" x="700" y="435">=</text><text x="713" y="424">v</text><text class="sub" x="720" y="427">2</text><text class="r" x="726" y="424">-</text><text x="732" y="424">v</text><text class="sub" x="740" y="427">1</text><text x="725" y="444">t</text></g>
          <path d="M712 429.500h33" stroke="#222"/>
          <text class="fma" x="694" y="479">F=<tspan class="ma">ma</tspan></text>
          <rect x="1018" y="424" width="167" height="149" fill="#e7f6f5"/>
          <path d="M1017 423.500h168" stroke="#111"/><path d="M1101.500 303v257" stroke="#666" stroke-dasharray="8 3 2 3"/>
          <path d="m1043.500 329 58.500 94.500L1120.500 554" fill="none" stroke="#333"/>
          <path d="m1083 393.500-6.500-5 5.500-3.500zM1114.500 511l-4-7 6-1z" fill="#111"/>
          <g class="label"><text x="1037" y="318">v<tspan class="s">1</tspan></text><text class="gk" x="1048" y="372">λ<tspan class="s" dx="2">1</tspan></text><text class="gk" x="1083" y="385">θ<tspan class="s" dx="3">1</tspan></text><text class="gk" x="1117" y="489">λ<tspan class="s" dx="2">2</tspan></text><text class="gk" x="1101" y="530">θ<tspan class="s" dx="3">2</tspan></text><text x="1130" y="549">v<tspan class="s">2</tspan></text></g>
          <g class="math"><text x="1025" y="629">n</text><text class="sub" x="1038" y="632">12</text><text x="1065" y="613">sinθ</text><text class="sub" x="1107" y="618">1</text><text x="1065" y="642">sinθ</text><text class="sub" x="1107" y="647">2</text><text x="1133" y="613">v</text><text class="sub" x="1144" y="618">1</text><text x="1133" y="642">v</text><text class="sub" x="1144" y="647">2</text><text x="1170" y="613">λ</text><text class="sub" x="1182" y="618">1</text><text x="1170" y="642">λ</text><text class="sub" x="1182" y="647">2</text></g>
          <g class="eq"><text x="1050" y="629">=</text><text x="1117" y="629">=</text><text x="1154" y="629">=</text></g>
          <path d="M1064 622.500h50M1132 622.500h19M1169 622.500h20" stroke="#111" stroke-width="1.300"/>
        </svg>
        <div class="float">
          <button aria-label="AI 魔術棒"><svg width="20" height="20" viewBox="0 0 20 20"><path d="M7.500 6 13 17.500q1.500 2 3.300.5.900-1 0-2.700L10.500 4Q9 2.300 7.600 3.300 6.500 4.500 7.500 6ZM8 8l3.500-2" fill="none" stroke="url(#g-ai)" stroke-width="1.500"/><path d="M3.500 11.500v5M1 14h5M17 5v5M14.500 7.500h5M13.500 1v3M5 5h1.500" fill="none" stroke="url(#g-ai)" stroke-width="1.500"/></svg></button>
          <button aria-label="AI 助手"><svg width="20" height="20" viewBox="0 0 20 20"><path d="M9 3c.8 5 2 6.200 8 8-6 1.800-7.200 3-8 8-.8-5-2-6.200-8-8 6-1.800 7.200-3 8-8" fill="#5a44ff"/><path d="M16.500 1v6M13.500 4h6" stroke="#2f7bff" stroke-width="2"/></svg></button>
        </div>
      </div>
      <div class="scroll-v"><i></i></div>
      <div class="scroll-h"><i></i></div>
      <div class="palette"><button aria-label="填充色彩"><svg width="15" height="15"><use href="#bucket" width="15" height="15"/></svg><i class="caret"></i></button><div class="chips" id="chips"></div></div>
    </section>

    <aside class="dock">
      <button class="fold" aria-label="展開"><svg width="14" height="12" viewBox="0 0 14 12"><path d="M1 .5 6.500 6 1 11.500M7 .5l5.500 5.500L7 11.500" stroke-width="1.800"/></svg></button>
      <button class="on" aria-label="填充"><svg width="18" height="20" viewBox="0 0 18 20"><path d="m7 2.500 9 8L8.500 18 1 10.500z" fill="#fff"/><path d="M4.500 10.500h9L8.500 6z" fill="#0080ff"/><path d="m6.500 1 4 4" stroke="#fff" stroke-width="1.600"/><path d="M16 13c1.500 2 1.500 2.500 1.500 3a1.500 1.500 0 0 1-3 0c0-.5 0-1 1.500-3" fill="#fff"/></svg></button>
      <button aria-label="歷史"><svg width="18" height="18" viewBox="0 0 18 18"><path d="M2.500 5.500a7.600 7.600 0 1 1-.9 5M1.500 1.500v4.500H6M9.500 5v4.500l3 2" stroke-width="1.800"/></svg></button>
      <button aria-label="說明"><svg width="20" height="20"><use href="#help" width="20" height="20" stroke-width="1.500"/></svg></button>
      <button class="pref" aria-label="設定"><svg width="18" height="18"><use href="#gear" width="18" height="18" stroke-width="1.600"/></svg></button>
    </aside>

    <aside class="props">
      <div class="prop-tabs"><button class="on">填充</button><button>線</button><button>陰影</button></div>
      <form>
        <label><input type="radio" name="fill" checked disabled>無填充</label>
        <label><input type="radio" name="fill" disabled>單色填充</label>
        <label><input type="radio" name="fill" disabled>漸變填充</label>
        <label><input type="radio" name="fill" disabled>單色漸變填充</label>
        <label><input type="radio" name="fill" disabled>圖案填充</label>
        <label><input type="radio" name="fill" disabled>圖片或紋理填充</label>
      </form>
    </aside>
  </main>

  <footer class="status">
    <button class="pages" aria-label="頁面面板"><svg width="18" height="12" viewBox="0 0 18 12"><path d="M.5 0v12M17.500 0v12M4.500 1.500h9v9h-9z"/></svg></button>
    <label class="page-pick"><select aria-label="頁面"><option>頁-1</option></select><i class="caret"></i></label>
    <button class="add-page" aria-label="新增頁面"><svg width="12" height="12" viewBox="0 0 12 12"><path d="M6 .5v11M.5 6h11"/></svg></button>
    <a class="page-tab" href="#page1">頁-1</a>
    <span class="count">形狀數量: &nbsp;1</span>
    <div class="view">
      <button aria-label="圖層"><svg width="18" height="16" viewBox="0 0 18 16"><path d="m9 1.500 7.500 4.800L9 11 1.500 6.300zM1.500 9.500 9 14.500l7.500-5"/></svg><i class="caret"></i></button>
      <button class="focus"><svg width="14" height="14" viewBox="0 0 14 14"><path d="M3.500 .5h-3V4M10.500 .5h3V4M3.500 13.500h-3V10M10.500 13.500h3V10M4.500 3.500h3a2 2 0 0 1 2 2v3a2 2 0 0 1-2 2h-3z"/></svg>專注</button>
      <button aria-label="播放"><svg width="17" height="17" viewBox="0 0 17 17"><circle cx="8.500" cy="8.500" r="7.500"/><path d="m6.500 5.500 5 3-5 3z"/></svg></button>
    </div>
    <div class="zoom">
      <button aria-label="縮小"><svg width="12" height="12" viewBox="0 0 12 12"><path d="M.5 5.500h11"/></svg></button>
      <input type="range" min="0" max="100" value="22" aria-label="縮放">
      <button aria-label="放大"><svg width="12" height="12" viewBox="0 0 12 12"><path d="M6 .5v11M.5 6h11"/></svg></button>
      <button class="pct">100%<i class="caret"></i></button>
    </div>
    <div class="fit">
      <button aria-label="導覽"><svg width="16" height="14" viewBox="0 0 16 14"><path d="m.5 2.500 5-2 5 2 5-2v11l-5 2-5-2-5 2zM5.500.5v11M10.500 2.500v11"/></svg></button>
      <button aria-label="符合視窗"><svg width="14" height="14" viewBox="0 0 14 14"><path d="M4 .5H.5V4M10 .5h3.500V4M4 13.500H.5V10M10 13.500h3.500V10M3.500 4.500h7v5h-7z"/></svg></button>
    </div>
  </footer>
</div>
<script src="app.js"></script>
</body>
</html>
```

FILE: styles.css
```css
* { box-sizing: border-box; }
body {
  margin: 0;
  height: 100vh;
  padding: 1px 1px 0 0;
  overflow: hidden;
  background: linear-gradient(100deg, #06a4ef 0%, #0a8fe6 40%, #0b4fc0 75%, #0a3fae 100%);
  font: 12px/16px "Open Sans", "Noto Sans CJK TC", sans-serif;
  color: #222;
}
.defs { position: absolute; }
button, input, select { font: inherit; color: inherit; border: 0; padding: 0; margin: 0; background: none; outline: 0; }
button { display: inline-flex; align-items: center; justify-content: center; white-space: nowrap; }
a { color: inherit; text-decoration: none; }
svg { display: block; flex: none; fill: none; stroke: currentColor; }
select { appearance: none; }
h1, h2 { margin: 0; font-size: 12px; }

.caret { flex: none; width: 0; height: 0; border: 3px solid transparent; border-top: 4px solid #777; border-bottom: 0; }
.caret.up { border-top: 0; border-bottom: 4px solid #777; }
.off { color: #b4b4b4; }
.off .caret { border-top-color: #b4b4b4; }
.dot { width: 6px; height: 6px; border-radius: 50%; background: #ff4040; }

.window { height: 100%; display: flex; flex-direction: column; background: #fff; border: 1px solid #d3d5da; border-width: 1px 0 1px 1px; border-top-color: #c9cbd0; border-radius: 7px; overflow: hidden; }

/* title bar */
.titlebar { flex: none; display: flex; height: 35px; background: #e0e1e5; }
.brand { display: flex; align-items: center; width: 247px; padding-left: 19px; padding-top: 3px; }
.brand svg, .doc-tab svg { stroke: none; }
.brand-name { margin-left: 4px; font-family: "Noto Sans", sans-serif; font-size: 13px; color: #111; white-space: nowrap; }
.pro { margin-left: auto; margin-right: 17px; width: 30px; height: 16px; border-radius: 3px; background: linear-gradient(90deg, #ffd978, #ffb52b); text-align: center; color: #4a3000; }
.doc-tab { display: flex; align-items: center; gap: 5px; width: 160px; height: 32px; margin-top: 3px; padding: 0 9px 0 13px; border-radius: 8px 8px 0 0; background: #f2f3f9; }
.doc-tab .dot { margin-left: auto; }
.add-doc { width: 38px; }
.win-tools { margin-left: auto; display: flex; align-items: center; gap: 20px; padding-right: 27px; }
.avatar { position: relative; width: 28px; height: 28px; margin-right: 2px; border: 2px solid #ffd67a; border-radius: 50%; background: #fff6df; font-size: 14px; font-weight: 600; color: #6b4a12; }
.gem { position: absolute; right: -5px; bottom: -2px; stroke: none; }

/* menu bar */
.menubar { flex: none; display: flex; align-items: center; height: 32px; background: #f2f3f9; }
.back { width: 38px; }
.file { gap: 6px; margin-left: 7px; padding-top: 1px; }
.vbar { width: 1px; height: 16px; background: #d8dae0; }
.file + .vbar { margin-left: 15px; }
.quick { flex: none; display: flex; justify-content: space-between; width: 192px; margin: 0 20px; }
.quick button { gap: 6px; height: 20px; }
.tabs { display: flex; gap: 32px; margin-left: 29px; height: 32px; }
.tabs a { display: flex; align-items: center; border-bottom: 2px solid transparent; border-top: 4px solid transparent; height: 31px; white-space: nowrap; }
.tabs .on { color: #0080ff; font-weight: 700; border-bottom-color: #0080ff; }
.ai { position: relative; }
.hot { position: absolute; left: 14px; top: -2px; width: 24px; height: 12px; border-radius: 6px 6px 6px 1px; background: linear-gradient(90deg, #7a3cff, #3b8bff); color: #fff; font-size: 10px; line-height: 12px; font-weight: 400; text-align: center; }
.find { flex: 1; max-width: 368px; display: flex; align-items: center; gap: 4px; height: 24px; margin: 1px 0 0 41px; padding: 0 5px; border: 1px solid #dcdee3; border-radius: 5px; background: #fff; color: #999; }
.find input { flex: 1; min-width: 0; color: #333; }
::placeholder { color: #8a8a8a; opacity: 1; }
.menu-right { margin-left: auto; display: flex; align-items: center; gap: 17px; padding: 1px 28px 0 0; color: #333; }
.menu-right button { gap: 5px; }
.help { position: relative; }
.help .caret { margin-left: -2px; }
.help .dot { position: absolute; right: 3px; top: -3px; }
.menu-right button:last-child { margin-left: 3px; }

/* ribbon */
.ribbon { flex: none; display: flex; height: 100px; padding-top: 10px; border-bottom: 1px solid #ebebee; color: #3b3b3b; }
.group { position: relative; flex: none; height: 81px; border-right: 1px solid #e6e6e9; }
.row { display: flex; height: 24px; margin-bottom: 10px; }
.group h2 { height: 16px; line-height: 16px; margin-top: -2px; text-align: center; font-size: 11px; font-weight: 400; color: #7b7b7b; }
.launch { position: absolute; right: 12px; bottom: 3px; color: #555; }
.clip { width: 88px; padding: 0 4px 0 15px; }
.clip .row { gap: 15px; }
.clip h2 { padding-right: 10px; }
.clip button { gap: 6px; }
.font { width: 372px; padding: 0 11px; }
.first { padding-left: 6px; }
.combo { display: flex; align-items: center; border: 1px solid #dfe0e4; border-radius: 4px; color: #222; }
.combo select { flex: 1; min-width: 0; }
.combo .caret { pointer-events: none; }
.family { width: 166px; margin-right: 8px; padding: 0 4px 0 6px; gap: 8px; }
.family svg { color: #bbb; }
.size { width: 64px; padding: 0 4px 0 12px; }
.w28 { width: 28px; }
.w34 { width: 34px; }
.w36 { width: 36px; gap: 4px; }
.ab { font-size: 15px; font-weight: 600; }
.tools { width: 189px; padding: 0 12px; }
.tools .row { gap: 8px; }
.tool { justify-content: flex-start; gap: 6px; width: 71px; padding-left: 6px; border-radius: 4px; color: #222; }
.tool + .tool { width: 84px; }
.tool svg { color: #3b3b3b; }
.sel { background: #e9ecf5; }
.styles { width: 456px; padding: 0 16px 0 17px; }
.style-row { display: flex; height: 58px; margin-bottom: 10px; }
.gallery { display: flex; align-items: center; gap: 8px; width: 352px; padding-left: 11px; border: 1px solid #e2e3e7; border-radius: 6px; margin-right: 18px; }
.gallery button { width: 32px; height: 32px; border: 1px solid #aaa; border-radius: 5px; background: #fdfdfd; color: #777; }
.gallery .dk { border-color: #777; }
.gallery .lt { border-color: #ccc; }
.scroller { display: flex; flex-direction: column; justify-content: space-between; height: 44px; margin-left: auto; padding-right: 4px; }
.more { padding-top: 2px; border-top: 1px solid #777; }
.more .caret { display: block; }
.paint { display: flex; flex-direction: column; align-items: flex-start; gap: 4px; padding-top: 1px; }
.paint button { height: 16px; gap: 5px; color: #999; }
.off svg { color: #b4b4b4; }
.arrange { width: 356px; padding: 0 0 0 18px; }
.matrix { display: grid; grid-template-columns: 78px 78px 81px 100px; grid-auto-rows: 24px; row-gap: 10px; margin-bottom: 10px; }
.matrix button { justify-content: flex-start; color: #999; }
.matrix svg { margin-right: 6px; }
.matrix .caret { margin-left: 3px; }
.arrange h2 { padding-right: 18px; }

/* work area */
.work { flex: 1; min-height: 0; display: flex; }
.rail { flex: none; width: 55px; display: flex; flex-direction: column; align-items: center; border-right: 1px solid #e8e8ec; color: #3b3b3b; }
.fold { flex: none; height: 40px; }
.rail a { height: 64px; text-align: center; color: #222; line-height: 18px; white-space: nowrap; }
.rail span { display: flex; align-items: center; justify-content: center; width: 32px; height: 32px; margin: 0 auto; border-radius: 6px; color: #3b3b3b; }
.rail .on, .rail .on span { color: #0080ff; }
.rail .on span { background: #e8f3ff; }
.rail .pref, .dock .pref { margin-top: auto; }
.rail .pref { margin-bottom: 18px; }

.panel { position: relative; flex: none; width: 289px; display: flex; flex-direction: column; border-right: 1px solid #e8e8ec; }
.sym-find { flex: none; display: flex; align-items: center; gap: 6px; height: 32px; margin: 16px 16px 0; padding: 0 9px; border: 1px solid #dfe0e4; border-radius: 5px; color: #999; font-size: 13px; }
.sym-find input { flex: 1; min-width: 0; }
.sym-find ::placeholder { color: #aaa; }
.panel-head, .panel-bar { flex: none; display: flex; align-items: center; justify-content: space-between; padding: 0 16px; border-bottom: 1px solid #e8e8ec; }
.panel-head { height: 45px; padding-top: 6px; }
.panel-head a { display: flex; align-items: center; gap: 4px; color: #0080ff; }
.panel-bar { height: 41px; padding-top: 2px; }
.panel-bar button { gap: 4px; }
.library { flex: 1; min-height: 0; overflow: hidden; padding: 0 16px; }
.cat { gap: 6px; height: 36px; padding: 0 0 4px 1px; }
.symbols { display: grid; grid-template-columns: repeat(5, 40px); gap: 8px; color: #999; }
.symbols > svg { width: 40px; height: 40px; border-radius: 4px; background: #f7f8fc; }
.g, .deg { stroke: none; fill: #666; font-size: 9px; text-anchor: start; }
.g { text-anchor: middle; }
.deg { font-size: 7px; }
.thumb { position: absolute; right: 2px; bottom: 132px; width: 6px; height: 94px; border-radius: 3px; background: #dfe0e6; }
.panel-foot { flex: none; height: 56px; padding: 11px 16px; border-top: 1px solid #e8e8ec; }
.panel-foot button { width: 100%; height: 32px; border-radius: 5px; background: #0080ff; color: #fff; }

.stage { flex: 1; min-width: 0; display: grid; grid-template: 18px minmax(0, 1fr) 15px 17px / 18px minmax(0, 1fr) 15px; }
.ruler-h { grid-area: 1 / 1 / 2 / 3; overflow: hidden; border-bottom: 1px solid #e3e4e9; border-right: 1px solid #e3e4e9; }
.ruler-v { grid-area: 2 / 1; min-height: 0; overflow: hidden; border-right: 1px solid #e3e4e9; }
.ruler { stroke: none; }
.ruler path { stroke: #dcdde2; }
.ruler text { font-size: 11px; fill: #777; }
.canvas { grid-area: 2 / 2; position: relative; overflow: hidden; border-right: 1px solid #e3e4e9; border-bottom: 1px solid #e3e4e9; }
.drawing { stroke: none; }
.scroll-v { grid-area: 1 / 3 / 3 / 4; padding: 139px 2px 0 3px; }
.scroll-v i { display: block; width: 10px; height: 307px; border-radius: 5px; background: #d1d2d4; }
.scroll-h { grid-area: 3 / 1 / 4 / 4; display: grid; grid-template-columns: 215fr 556fr 279fr; align-items: center; border-bottom: 1px solid #e8e8ec; }
.scroll-h i { grid-column: 2; height: 10px; border-radius: 5px; background: #d1d2d4; }
.palette { grid-area: 4 / 1 / 5 / 4; display: flex; align-items: center; }
.palette button { width: 35px; gap: 2px; padding-left: 6px; color: #444; }
.chips { flex: 1; display: flex; gap: 2px; }
.chips i { flex: 1; height: 14px; border-radius: 2px; }
.float { position: absolute; right: 15px; bottom: 15px; display: flex; align-items: center; width: 89px; height: 41px; border-radius: 20px; background: #fff; box-shadow: 0 2px 10px rgba(0, 0, 0, .16); }
.float button { flex: 1; height: 24px; }
.float button + button { border-left: 1px solid #e5e5ea; }
.float svg { stroke: none; }

.label { font-family: "Liberation Serif", "Noto Sans CJK TC", serif; font-size: 11px; fill: #222; }
.label .m { font-size: 12px; }
.label .gk { font-size: 14px; font-style: italic; }
.label .s { font-size: 9px; font-style: normal; }
.math { font-family: "Liberation Serif", serif; font-size: 24px; font-style: italic; fill: #222; }
.math .sub { font-size: 13px; font-style: normal; }
.math .r { font-style: normal; }
.math.mid { font-size: 18px; }
.math.mid .sub { font-size: 10px; }
.eq { font-family: "Liberation Serif", serif; font-size: 20px; font-weight: 700; fill: #222; }
.fma { font-family: "Liberation Serif", serif; font-size: 19px; fill: #222; }
.ma { font-weight: 700; }

.dock { flex: none; width: 36px; display: flex; flex-direction: column; border-left: 1px solid #e8e8ec; border-right: 1px solid #e8e8ec; color: #3b3b3b; }
.dock .fold { height: 32px; }
.dock button { flex: none; height: 46px; }
.dock .on { height: 35px; margin-bottom: 3px; background: #0080ff; }
.dock .on svg { stroke: none; }
.dock .pref { height: 32px; }
.props { flex: none; width: 239px; background: #fdfdfd; }
.prop-tabs { display: flex; justify-content: space-between; height: 33px; padding: 2px 27px 0 26px; border-bottom: 1px solid #e8e8ec; font-size: 13px; color: #222; }
.prop-tabs .on { color: #0080ff; font-weight: 700; }
.props form { padding: 6px 0 0 21px; }
.props label { display: flex; align-items: center; gap: 9px; height: 32px; font-size: 13px; color: #a3a3a3; }
.props input { appearance: none; width: 14px; height: 14px; border: 1px solid #dfe2ef; border-radius: 50%; background: #eff1f9; }
.props input:checked { border: 4px solid #dedede; background: #fff; }

/* status bar */
.status { flex: none; display: flex; align-items: center; height: 32px; background: #f2f3f9; }
.status > * { height: 24px; }
.pages { width: 48px; border-right: 1px solid #d8dae0; }
.pages svg { margin-left: 6px; }
.page-pick { display: flex; align-items: center; width: 129px; padding: 0 13px 0 16px; border-right: 1px solid #d8dae0; font-size: 14px; }
.page-pick select { flex: 1; }
.add-page { width: 41px; border-right: 1px solid #d8dae0; }
.page-tab { width: 73px; line-height: 24px; text-align: center; border-right: 1px solid #d8dae0; font-size: 14px; font-weight: 600; color: #0080ff; }
.count { margin-left: auto; width: 85px; padding-left: 8px; line-height: 24px; border-left: 1px solid #d8dae0; border-right: 1px solid #d8dae0; white-space: nowrap; }
.view { display: flex; align-items: center; justify-content: space-between; width: 145px; padding: 0 11px; border-right: 1px solid #d8dae0; }
.view button { gap: 5px; }
.focus { font-size: 13px; }
.view .focus { gap: 9px; }
.zoom { display: flex; align-items: center; gap: 10px; width: 228px; padding-left: 10px; border-right: 1px solid #d8dae0; }
.pct { gap: 10px; margin-left: 8px; }
.zoom input { appearance: none; width: 96px; height: 12px; background: linear-gradient(#444, #444) 0 50% / 22% 3px no-repeat, linear-gradient(#fff, #fff) 0 50% / 100% 3px no-repeat; }
.zoom input::-webkit-slider-thumb { appearance: none; width: 12px; height: 12px; border: 2px solid #333; border-radius: 50%; background: #fff; }
.fit { display: flex; align-items: center; gap: 17px; padding: 0 22px 0 12px; }
```

FILE: app.js
```js
const STEP = 37.8;
const TICK = STEP / 2;

// Horizontal ruler: a labelled tick every 10 mm, a short one between.
function drawHorizontal(host) {
  const width = host.clientWidth;
  let out = "";
  for (let i = 0; 27 + i * STEP < width; i++) {
    const x = Math.round(27 + i * STEP) + 0.5;
    const half = Math.round(27 + i * STEP + TICK) + 0.5;
    out += `<path d="M${x} 0v18M${half} 12v6"/>`;
    if (x + 24 < width) out += `<text x="${x + 2}" y="12">${-290 + i * 10}</text>`;
  }
  host.innerHTML = `<svg class="ruler" width="${width}" height="17">${out}</svg>`;
}

// Vertical ruler with its labels turned upwards.
function drawVertical(host) {
  const height = host.clientHeight;
  let out = `<path d="M11 3.5h7"/>`;
  for (let i = 0; 22 + i * STEP < height; i++) {
    const y = Math.round(22 + i * STEP) + 0.5;
    const half = Math.round(22 + i * STEP + TICK) + 0.5;
    const n = 30 + i * 10;
    const end = y + (n > 99 ? 21 : 14);
    out += `<path d="M0 ${y}h18M11 ${half}h7"/>`;
    if (end < height) out += `<text transform="translate(12 ${end}) rotate(-90)">${n}</text>`;
  }
  host.innerHTML = `<svg class="ruler" width="17" height="${height}">${out}</svg>`;
}

function drawRulers() {
  const h = document.getElementById("ruler-h");
  const v = document.getElementById("ruler-v");
  h.innerHTML = v.innerHTML = "";
  drawHorizontal(h);
  drawVertical(v);
}
drawRulers();
window.addEventListener("resize", drawRulers);

const COLORS = `ae1121 c90c31 ec4562 f8657f f99dae 28808f 37a9c4 40c1de 62daef a6f1fd f0562a ff7e3b ff951c ffb614 ffc561
149580 19b5a0 1acbb2 66dac7 84ecdc 9a2d5f c74f8e e467aa f986c6 f1c1dc 5f8914 77a227 9abd27 b2d04c d0e08f
2029ae 333fd9 6b40f5 8f6bfa ac8ffa ffc700 fddc2e f0e92a faf34b fcfd81 9a4bdc c44fe6 d66df8 bf83ff dba3ff
2f8147 3da357 4fae72 62bf88 8fd4a7 e7342c ff4539 ff6060 ff7979 ff9089 2343a5 2c57d4 3566f6 638aff 8bb0f8
722d05 983b05 a9432a d36243 e67a5a 188bd8 2c9cf8 42b0ff 3fcbff 66dffd 774f39 965f46 b4754f dc895b f59b6f
8c8178 b2ac9b cdc8b8 e4dacb f3ecd9 191919 2d2d2f 444446 5c5c5c 7f7f7f bbbbbd cacaca dadada e8e8e8 f3f3f3 ffffff`.split(/\s+/);
document.getElementById("chips").innerHTML = COLORS.map(c => `<i style="background:#${c}"></i>`).join("");
```
